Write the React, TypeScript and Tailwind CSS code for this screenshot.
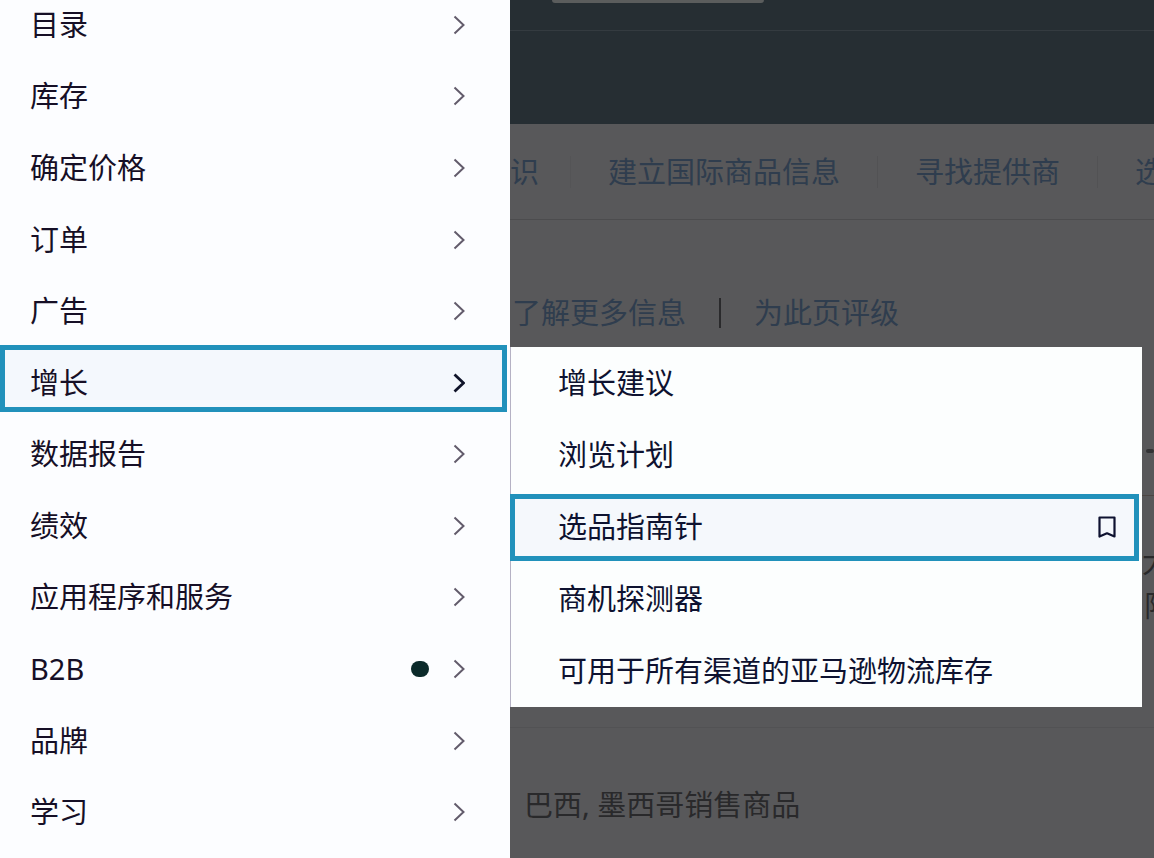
type MenuItem = { label: string; active?: boolean; dot?: boolean };

const menu: MenuItem[] = [
  { label: "目录" },
  { label: "库存" },
  { label: "确定价格" },
  { label: "订单" },
  { label: "广告" },
  { label: "增长", active: true },
  { label: "数据报告" },
  { label: "绩效" },
  { label: "应用程序和服务" },
  { label: "B2B", dot: true },
  { label: "品牌" },
  { label: "学习" },
];

const submenu: MenuItem[] = [
  { label: "增长建议" },
  { label: "浏览计划" },
  { label: "选品指南针", active: true },
  { label: "商机探测器" },
  { label: "可用于所有渠道的亚马逊物流库存" },
];

function Chevron({ active }: { active?: boolean }) {
  return (
    <svg
      viewBox="0 0 12 20"
      className={active ? "h-5 w-3 text-[#10142a]" : "h-5 w-3 text-[#625b6b]"}
      fill="none"
      stroke="currentColor"
      strokeWidth={active ? 2.8 : 2}
      aria-hidden="true"
    >
      <path d="M1.5 1.5 10.5 10 1.5 18.5" />
    </svg>
  );
}

function BookmarkIcon() {
  return (
    <svg
      viewBox="0 0 18 22"
      className="h-[22px] w-[18px]"
      fill="none"
      stroke="currentColor"
      strokeWidth={2.2}
      strokeLinejoin="round"
      aria-hidden="true"
    >
      <path d="M1.5 1.5H16.5V20.5L9 17.3 1.5 20.5Z" />
    </svg>
  );
}

function SideMenu() {
  return (
    <nav className="absolute inset-y-0 left-0 w-[510px] overflow-hidden bg-[#fcfdff]">
      <ul className="-mt-[11px] grid h-[calc(100vh+1px)] grid-rows-12">
        {menu.map((item) => (
          <li key={item.label} className="relative">
            {item.active && (
              <span className="absolute -top-[2px] right-[3px] left-0 h-[67px] border-[5px] border-[#2191bb] bg-[#f4f8fd]" />
            )}
            <button
              type="button"
              className="relative flex h-full w-full items-center gap-8 pr-[45px] pl-[30px] text-left text-[#160f26]"
            >
              <span className="grow">{item.label}</span>
              <span className="flex items-center gap-6">
                {item.dot && <span className="h-4 w-[18px] rounded-full bg-[#0b2a2a]" />}
                <Chevron active={item.active} />
              </span>
            </button>
          </li>
        ))}
      </ul>
    </nav>
  );
}

function SubMenu() {
  return (
    <ul className="absolute top-[347px] right-3 left-[510px] border-l border-[#b5b2c4] bg-[#fcfefe]">
      {submenu.map((item) => (
        <li key={item.label} className="relative h-[72px]">
          {item.active && (
            <span className="absolute top-[3px] right-[3px] -left-px h-[67px] border-[5px] border-[#2191bb] bg-[#f5f8fc]" />
          )}
          <button
            type="button"
            className="relative flex h-full w-full items-center justify-between pr-[26px] pl-[47px] text-left text-[#0e1230]"
          >
            {item.label}
            {item.active && <BookmarkIcon />}
          </button>
        </li>
      ))}
    </ul>
  );
}

export default function App() {
  return (
    <div className="relative h-screen overflow-hidden bg-[#58585a] font-['Noto_Sans','Noto_Sans_CJK_SC',sans-serif] text-[29px] leading-9">
      <div className="flex h-full flex-col pl-[510px] whitespace-nowrap text-[#2f3d4e]">
        <header className="h-[124px] shrink-0 bg-[#262e33]">
          <div className="h-[31px] border-b border-[#343b40] pl-[42px]">
            <div className="h-[3px] w-[212px] rounded-b bg-[#5b5d5d]" />
          </div>
        </header>
        <nav className="flex h-24 shrink-0 items-center overflow-hidden border-b border-[#4c4c4e]">
          <a href="#knowledge" className="w-[60px] shrink-0">识</a>
          <span className="h-8 w-px shrink-0 bg-[#545456]" />
          <a href="#listing" className="shrink-0 px-[37px]">建立国际商品信息</a>
          <span className="h-8 w-px shrink-0 bg-[#525254]" />
          <a href="#provider" className="shrink-0 px-[37px]">寻找提供商</a>
          <span className="h-8 w-px shrink-0 bg-[#525254]" />
          <a href="#select" className="shrink-0 pl-[37px]">选</a>
        </nav>
        <div className="flex h-[186px] shrink-0 items-center pl-[2px]">
          <a href="#more">了解更多信息</a>
          <span className="mx-[33px] h-[30px] w-[2px] bg-[#2a2a2c]" />
          <a href="#rate">为此页评级</a>
        </div>
        <section className="flex min-h-0 grow flex-col overflow-hidden text-[#29292b]">
          <div className="flex h-[90px] shrink-0 items-center justify-end border-b border-[#4c4644]">
            <span className="h-1 w-2 rounded-full bg-[#333335]" />
          </div>
          <div className="flex shrink-0 flex-col items-end pt-12">
            <span className="w-3">大</span>
            <span className="mt-2 w-[10px]">限</span>
          </div>
        </section>
        <div className="flex h-[131px] shrink-0 items-center border-t border-[#525254] pt-6 pl-[14px] text-[#29292b]">
          巴西, 墨西哥销售商品
        </div>
      </div>
      <SideMenu />
      <SubMenu />
    </div>
  );
}
